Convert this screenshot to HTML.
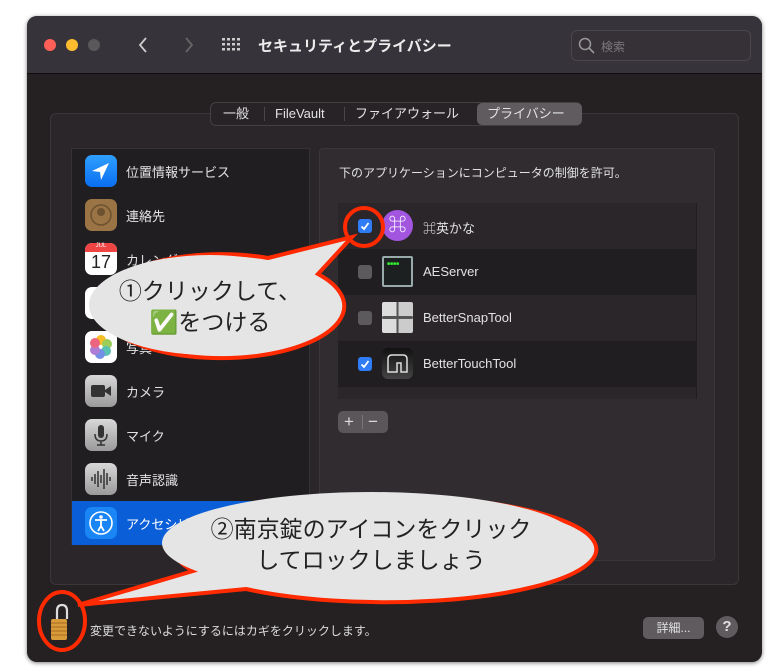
<!DOCTYPE html>
<html><head><meta charset="utf-8"><style>
*{margin:0;padding:0;box-sizing:border-box}
body{width:779px;height:672px;background:#fff;position:relative;overflow:hidden;font-family:"Liberation Sans","Noto Sans CJK JP",sans-serif;color:#e2e2e2}
.abs{position:absolute}
.win{left:27px;top:16px;width:735px;height:646px;background:#252123;border-radius:10px;box-shadow:0 1px 4px rgba(0,0,0,.5);overflow:hidden}
.tb{left:0;top:0;width:735px;height:58px;background:#37333a;border-bottom:1px solid #0f0d0f}
.dot{width:12px;height:12px;border-radius:50%;top:23px}
.row{position:absolute;left:0;width:238px;height:44px}
.row .ic{position:absolute;left:13px;top:6px;width:32px;height:32px;border-radius:7px}
.row .t{position:absolute;left:54px;top:13px;font-size:13px}
.arow{position:absolute;left:0;width:358px;height:46px}
.cb{position:absolute;left:20px;top:16px;width:14px;height:14px;border-radius:3px;background:#5d5a5d}
.cb.on{background:#2e7cf6}
.aic{position:absolute;left:44px;top:7px;width:31px;height:31px;border-radius:6px}
.at{position:absolute;left:85px;top:15px;font-size:13px}
.tab{position:absolute;top:0;line-height:22px}
</style></head><body>
<div class="abs win">
 <div class="abs tb">
  <div class="abs dot" style="left:17px;background:#fe5f57"></div>
  <div class="abs dot" style="left:39px;background:#febc2e"></div>
  <div class="abs dot" style="left:61px;background:#5b585b"></div>
  <svg class="abs" style="left:110px;top:20px" width="60" height="18"><path d="M9 2 L3 9 L9 16" stroke="#ccc" stroke-width="1.8" fill="none"/><path d="M49 2 L55 9 L49 16" stroke="#666" stroke-width="1.8" fill="none"/></svg>
  <svg class="abs" style="left:195px;top:22px" width="18" height="14"><g fill="#ccc"><rect x="0" y="0" width="3" height="2.5"/><rect x="5" y="0" width="3" height="2.5"/><rect x="10" y="0" width="3" height="2.5"/><rect x="15" y="0" width="3" height="2.5"/><rect x="0" y="5" width="3" height="2.5"/><rect x="5" y="5" width="3" height="2.5"/><rect x="10" y="5" width="3" height="2.5"/><rect x="15" y="5" width="3" height="2.5"/><rect x="0" y="10" width="3" height="2.5"/><rect x="5" y="10" width="3" height="2.5"/><rect x="10" y="10" width="3" height="2.5"/><rect x="15" y="10" width="3" height="2.5"/></g></svg>
  <div class="abs" style="left:231px;top:19px;font-size:15px;font-weight:bold;color:#ececec">セキュリティとプライバシー</div>
  <div class="abs" style="left:544px;top:14px;width:180px;height:31px;border:1px solid #4a464c;border-radius:6px;background:#353137"></div>
  <svg class="abs" style="left:551px;top:21px" width="18" height="18"><circle cx="7" cy="7" r="5.5" stroke="#999" stroke-width="1.5" fill="none"/><path d="M11 11 L16 16" stroke="#999" stroke-width="1.6"/></svg>
  <div class="abs" style="left:574px;top:22px;font-size:12px;color:#7c797c">検索</div>
 </div>
 <div class="abs" style="left:23px;top:97px;width:689px;height:472px;border:1px solid #3a363a;border-radius:6px;background:#2a2629"></div>
 <div class="abs" style="left:183px;top:86px;width:372px;height:24px;border:1px solid #434043;border-radius:6px;background:#272326;font-size:13px">
  <span class="tab" style="left:12px">一般</span>
  <span class="abs" style="left:53px;top:4px;width:1px;height:14px;background:#4a474a"></span>
  <span class="tab" style="left:64px">FileVault</span>
  <span class="abs" style="left:133px;top:4px;width:1px;height:14px;background:#4a474a"></span>
  <span class="tab" style="left:144px">ファイアウォール</span>
  <span class="abs" style="left:266px;top:0;width:105px;height:22px;background:#5f5b5f;border-radius:5px"></span>
  <span class="tab" style="left:276px">プライバシー</span>
 </div>
 <div class="abs" style="left:44px;top:132px;width:239px;height:397px;background:#211e21;border:1px solid #353235">
  <div class="row" style="top:0"><div class="ic" style="background:linear-gradient(#2fa0ff,#0a6ef0)"><svg width="32" height="32"><path d="M24 8 L7 16 L15 17 L16 25 Z" fill="#fff"/></svg></div><div class="t">位置情報サービス</div></div>
  <div class="row" style="top:44px"><div class="ic" style="background:#9a7445"><svg width="32" height="32"><circle cx="16" cy="16" r="10" fill="none" stroke="#6d5131" stroke-width="1.5"/><circle cx="16" cy="13" r="4" fill="#6d5131"/></svg></div><div class="t">連絡先</div></div>
  <div class="row" style="top:88px"><div class="ic" style="background:#fff"><div style="height:9px;background:#e44;border-radius:7px 7px 0 0;font-size:6px;color:#fff;text-align:center">JUL</div><div style="color:#222;font-size:18px;text-align:center;line-height:20px">17</div></div><div class="t">カレンダー</div></div>
  <div class="row" style="top:132px"><div class="ic" style="background:#fff"></div><div class="t">リマインダー</div></div>
  <div class="row" style="top:176px"><div class="ic" style="background:#fff"><svg width="32" height="32"><g opacity=".85"><circle cx="16" cy="9" r="5" fill="#f5b400"/><circle cx="22" cy="13" r="5" fill="#8ac53e"/><circle cx="21" cy="20" r="5" fill="#3cb7a5"/><circle cx="15" cy="23" r="5" fill="#5b7be0"/><circle cx="10" cy="19" r="5" fill="#a065d0"/><circle cx="10" cy="12" r="5" fill="#e94b6a"/></g></svg></div><div class="t">写真</div></div>
  <div class="row" style="top:220px"><div class="ic" style="background:linear-gradient(#d8d8d8,#9a9a9a)"><svg width="32" height="32"><rect x="6" y="10" width="14" height="12" rx="2" fill="#333"/><path d="M20 15 L26 11 V21 L20 17Z" fill="#333"/></svg></div><div class="t">カメラ</div></div>
  <div class="row" style="top:264px"><div class="ic" style="background:linear-gradient(#d8d8d8,#9a9a9a)"><svg width="32" height="32"><rect x="13" y="6" width="6" height="13" rx="3" fill="#333"/><path d="M10 15 Q10 22 16 22 Q22 22 22 15 M16 22 V26 M12 26 H20" stroke="#333" stroke-width="1.5" fill="none"/></svg></div><div class="t">マイク</div></div>
  <div class="row" style="top:308px"><div class="ic" style="background:linear-gradient(#d8d8d8,#9a9a9a)"><svg width="32" height="32"><path d="M7 14v4M10 11v10M13 8v16M16 12v8M19 6v20M22 10v12M25 14v4" stroke="#333" stroke-width="1.5"/></svg></div><div class="t">音声認識</div></div>
  <div class="row" style="top:352px;background:#0a5fd8"><div class="ic" style="background:#1a86f5"><svg width="32" height="32"><circle cx="16" cy="16" r="11" stroke="#fff" stroke-width="1.6" fill="none"/><circle cx="16" cy="10" r="1.8" fill="#fff"/><path d="M10 13 L22 13 M16 13 V19 L13 24 M16 19 L19 24" stroke="#fff" stroke-width="1.8" fill="none"/></svg></div><div class="t" style="color:#fff">アクセシビリティ</div></div>
 </div>
 <div class="abs" style="left:292px;top:132px;width:396px;height:413px;background:#302c30;border:1px solid #3a373a;border-radius:4px">
  <div class="abs" style="left:19px;top:15px;font-size:12px">下のアプリケーションにコンピュータの制御を許可。</div>
  <div class="abs" style="left:18px;top:54px;width:359px;height:196px;background:#211e21;overflow:hidden">
   <div class="arow" style="top:0;background:#2a262a"><div class="cb on"><svg width="14" height="14"><path d="M3.5 7.5 L6 10 L10.5 4" stroke="#fff" stroke-width="1.8" fill="none"/></svg></div><div class="aic" style="border-radius:50%;background:#a256e0;color:#fff;font-size:18px;text-align:center;line-height:31px">⌘</div><div class="at">⌘英かな</div></div>
   <div class="arow" style="top:46px"><div class="cb"></div><div class="aic" style="background:#1d2020;border:2px solid #9aa;border-radius:2px"><div style="color:#3f3;font-size:5px;margin:3px">■■■■</div></div><div class="at">AEServer</div></div>
   <div class="arow" style="top:92px;background:#2a262a"><div class="cb"></div><div class="aic" style="background:linear-gradient(90deg,#ddd 47%,#555 47%,#555 53%,#ccc 53%);border-radius:2px"></div><div class="aic" style="top:21px;height:3px;background:#555"></div><div class="at">BetterSnapTool</div></div>
   <div class="arow" style="top:138px"><div class="cb on"><svg width="14" height="14"><path d="M3.5 7.5 L6 10 L10.5 4" stroke="#fff" stroke-width="1.8" fill="none"/></svg></div><div class="aic" style="background:linear-gradient(#111,#444)"><svg width="31" height="31"><path d="M6 24 V11 Q6 7 10 7 H21 Q25 7 25 11 V24 H19 V15 H15 V24 Z" stroke="#ddd" stroke-width="1.5" fill="none"/></svg></div><div class="at">BetterTouchTool</div></div>
   <div class="arow" style="top:184px;background:#2a262a"></div>
  </div>
  <div class="abs" style="left:18px;top:262px;width:50px;height:22px;background:#5a565a;border-radius:5px;color:#ddd;font-size:17px;line-height:21px"><span class="abs" style="left:6px">+</span><span class="abs" style="left:24px;top:4px;width:1px;height:14px;background:#777"></span><span class="abs" style="left:30px">−</span></div>
 </div>
 <svg class="abs" style="left:20px;top:586px" width="24" height="40"><path d="M10 20 V9 Q10 3 15 3 Q20 3 20 9 V17" stroke="#ddd" stroke-width="2.2" fill="none"/><rect x="4" y="17" width="16" height="21" rx="2" fill="#d89b3a"/><g stroke="#a86a1f" stroke-width="1"><path d="M4 21H20M4 25H20M4 29H20M4 33H20"/></g></svg>
 <div class="abs" style="left:63px;top:606px;font-size:12px;color:#ddd">変更できないようにするにはカギをクリックします。</div>
 <div class="abs" style="left:616px;top:601px;width:61px;height:22px;background:#5f5b5f;border-radius:5px;font-size:12px;text-align:center;line-height:22px">詳細...</div>
 <div class="abs" style="left:689px;top:600px;width:22px;height:22px;border-radius:50%;background:#5f5b5f;font-size:15px;text-align:center;line-height:22px;font-weight:bold">?</div>
</div>
<svg class="abs" style="left:0;top:0" width="779" height="672">
 <g stroke="#ff2a00" stroke-width="4" fill="#e5e5e5">
  <path d="M268 258 L352 237 L318 274 A123 52 0 1 1 268 258 Z"/>
  <path d="M193 571 L78 605 L246 589 A211 53 0 1 0 193 571 Z"/>
 </g>
 <ellipse cx="210" cy="305" rx="121" ry="50" fill="#e5e5e5"/>
 <ellipse cx="371" cy="543" rx="209" ry="51" fill="#e5e5e5"/>
 <circle cx="364" cy="227" r="19" stroke="#ff2a00" stroke-width="4" fill="none"/>
 <ellipse cx="62" cy="621" rx="23" ry="29" stroke="#ff2a00" stroke-width="4" fill="none"/>
 <g font-family="Liberation Sans,Noto Sans CJK JP,sans-serif" font-size="23" fill="#222" text-anchor="middle">
  <text x="210" y="299">①クリックして、</text>
  <text x="210" y="330"><tspan fill="#2fb12f">✅</tspan>をつける</text>
  <text x="371" y="537">②南京錠のアイコンをクリック</text>
  <text x="371" y="568">してロックしましょう</text>
 </g>
</svg>
</body></html>
